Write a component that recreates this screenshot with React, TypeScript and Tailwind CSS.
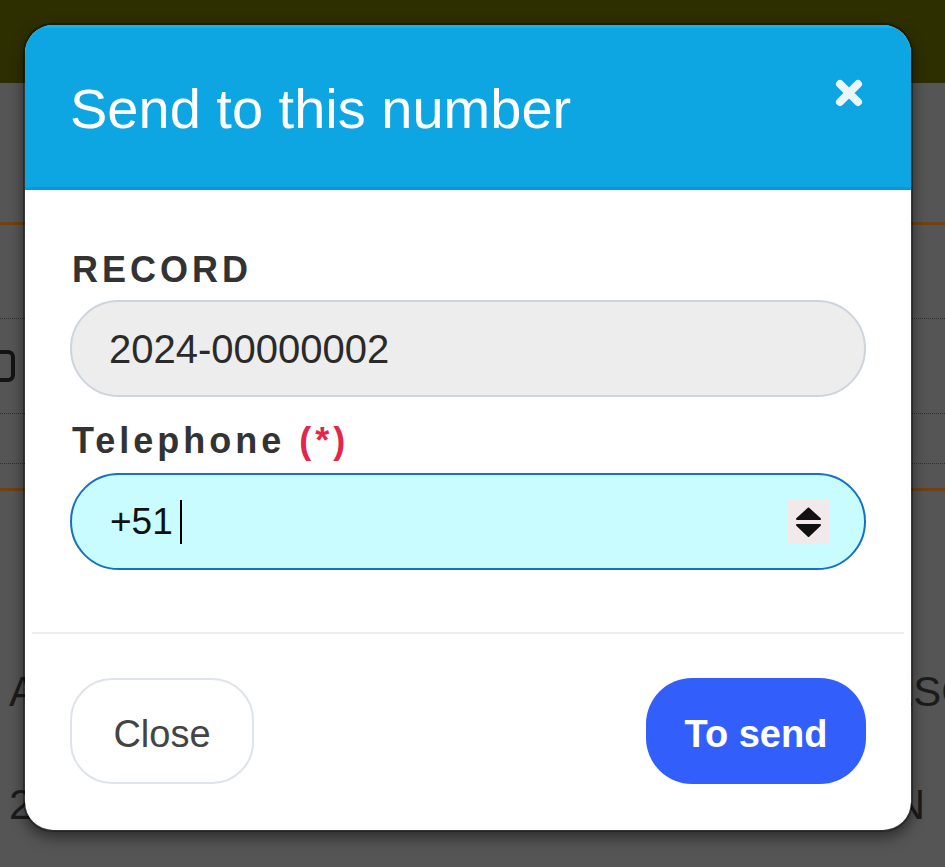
import React from "react";

const font = { fontFamily: '"Liberation Sans", Arial, sans-serif' };

function CloseIcon() {
  return (
    <svg width="32" height="32" viewBox="0 0 32 32" className="shrink-0">
      <path d="M7 7 L25 25 M25 7 L7 25" stroke="#eaf6fc" strokeWidth="8" strokeLinecap="round" />
    </svg>
  );
}

function Spinner() {
  return (
    <div className="w-[43px] h-[44px] bg-[#f2e9ea] shrink-0">
      <svg width="43" height="44" viewBox="0 0 43 44">
        <path d="M10 19 L21.5 8.5 L33 19 Z" fill="#111" stroke="#111" strokeWidth="2" strokeLinejoin="round" />
        <path d="M10 25 L33 25 L21.5 36 Z" fill="#111" stroke="#111" strokeWidth="2" strokeLinejoin="round" />
      </svg>
    </div>
  );
}

export default function App() {
  return (
    <div className="relative w-[945px] h-[867px] overflow-hidden bg-[#555555]" style={font}>
      {/* background page (under overlay) */}
      <div className="flex flex-col">
        <div className="h-[83px] bg-[#2e2f00]" />
        <div className="h-[139px]" />
        <div className="h-[3px] bg-[#6e4116]" />
        <div className="h-[93px]" />
        <div className="border-t border-dotted border-[#2f2f2f]" />
        <div className="h-[94px] pt-[31px]">
          <div className="ml-[-20px] w-[35px] h-[32px] border-[4px] border-[#141414] rounded-[7px]" />
        </div>
        <div className="border-t border-dotted border-[#2f2f2f]" />
        <div className="h-[49px]" />
        <div className="border-t border-dotted border-[#2f2f2f]" />
        <div className="h-[24px]" />
        <div className="h-[3px] bg-[#6e4116]" />
        <div className="h-[180px]" />
        <div className="grid grid-cols-[855px_90px] text-[42px] leading-[42px] text-[#1b1b1b]">
          <div className="pl-[9px] whitespace-nowrap overflow-hidden">ACCIONES</div>
          <div className="whitespace-nowrap overflow-hidden">DESC</div>
        </div>
        <div className="h-[71px]" />
        <div className="grid grid-cols-[855px_90px] text-[42px] leading-[42px] text-[#1b1b1b]">
          <div className="pl-[9px] whitespace-nowrap overflow-hidden">2024</div>
          <div className="whitespace-nowrap overflow-hidden">SIN</div>
        </div>
      </div>

      {/* modal */}
      <div className="absolute left-[23px] top-[23px] w-[890px] rounded-[30px] border-2 border-[rgba(0,0,0,0.35)] bg-white bg-clip-padding overflow-hidden shadow-[0_6px_14px_rgba(0,0,0,0.45)]">
        <div className="h-[165px] bg-[#0ea5e3] border-t-[3px] border-t-[#12b3f3] border-b-[3px] border-b-[#0b98d8] flex items-start justify-between pl-[45px] pr-[46px] pt-[49px]">
          <div className="mt-[4px] text-[56px] leading-[56px] text-white">Send to this number</div>
          <CloseIcon />
        </div>

        <div className="px-[45px] pt-[60px] pb-[62px] flex flex-col">
          <div className="text-[36px] leading-[40px] tracking-[4px] font-bold text-[#333333] pl-[2px]">RECORD</div>
          <div className="mt-[10px] h-[97px] rounded-full border-2 border-[#cdd4dc] bg-[#ededed] pl-[37px] flex items-center text-[40px] text-[#2a2a2a]">
            2024-00000002
          </div>
          <div className="mt-[24px] text-[36px] leading-[40px] tracking-[4px] font-bold text-[#333333] pl-[2px]">
            Telephone <span className="text-[#e3264c]">(*)</span>
          </div>
          <div className="mt-[12px] h-[97px] rounded-full border-2 border-[#1670c4] bg-[#c8fcfe] pl-[38px] pr-[34px] flex items-center text-[37px] text-[#111]">
            <span>+51</span>
            <span className="ml-[7px] w-[2px] h-[44px] bg-black" />
            <div className="ml-auto">
              <Spinner />
            </div>
          </div>
        </div>

        <div className="mx-[7px] h-[2px] bg-[#eaedf0]" />

        <div className="px-[45px] pt-[44px] pb-[46px] flex justify-between items-center">
          <button className="w-[184px] h-[106px] pt-[6px] rounded-[42px] border-2 border-[#dfe4ea] bg-white text-[38px] text-[#444]">
            Close
          </button>
          <button className="w-[220px] h-[106px] pt-[6px] rounded-[46px] bg-[#325ffc] text-[38px] font-bold text-white">
            To send
          </button>
        </div>
      </div>
    </div>
  );
}
